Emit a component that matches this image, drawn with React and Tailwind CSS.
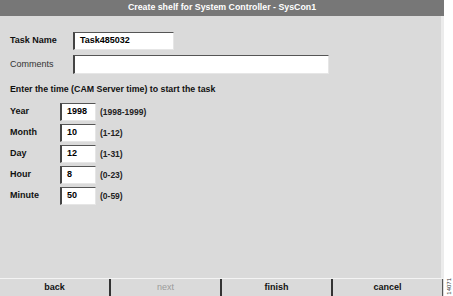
import React from 'react';

const font = { fontFamily: '"Liberation Sans", Arial, sans-serif' };

const Field = ({ value, className }) => (
  <div
    className={`h-[18px] bg-white border-t border-l-2 border-t-[#555] border-l-[#444] border-r border-b border-r-[#e6e6e6] border-b-[#e6e6e6] pl-[5px] pt-[1px] text-[9px] font-bold text-black leading-[12px] ${className}`}
  >
    {value}
  </div>
);

const TimeRow = ({ label, value, range }) => (
  <div className="flex items-center h-[18px]">
    <span className="w-[50px] text-[9px] font-bold text-[#111]">{label}</span>
    <Field value={value} className="w-[36px]" />
    <span className="ml-[4px] text-[8.5px] font-bold text-[#222]">{range}</span>
  </div>
);

const App = () => {
  return (
    <div className="w-[453px] h-[296px] flex bg-white overflow-hidden" style={font}>
      {/* main panel */}
      <div className="w-[444px] h-full flex flex-col">
        <div className="h-[16px] bg-[#777777] flex items-center justify-center text-white text-[8.8px] font-bold">
          Create shelf for System Controller - SysCon1
        </div>

        <div className="flex-1 bg-[#dadada] border-r-[3px] border-r-[#ececec] pl-[10px] pt-[16px]">
          {/* Task name */}
          <div className="flex items-center h-[18px]">
            <span className="w-[63px] text-[9px] font-bold text-[#111]">Task Name</span>
            <Field value="Task485032" className="w-[101px]" />
          </div>

          {/* Comments */}
          <div className="flex items-center h-[19px] mt-[5px]">
            <span className="w-[63px] text-[9px] text-[#333]">Comments</span>
            <Field value="" className="w-[256px] h-[19px]" />
          </div>

          <div className="mt-[10px] text-[8.8px] font-bold text-[#111] leading-[10px]">
            Enter the time (CAM Server time) to start the task
          </div>

          <div className="mt-[9px] flex flex-col gap-[3px]">
            <TimeRow label="Year" value="1998" range="(1998-1999)" />
            <TimeRow label="Month" value="10" range="(1-12)" />
            <TimeRow label="Day" value="12" range="(1-31)" />
            <TimeRow label="Hour" value="8" range="(0-23)" />
            <TimeRow label="Minute" value="50" range="(0-59)" />
          </div>
        </div>

        {/* button bar */}
        <div className="h-[18px] flex bg-[#dadada] border-t border-t-[#f4f4f4] pr-[1px]">
          <div className="flex-1 flex items-center justify-center text-[9px] font-bold text-[#111] border-r-2 border-r-[#333]">back</div>
          <div className="flex-1 flex items-center justify-center text-[9px] text-[#9a9a9a] border-r-2 border-r-[#333]">next</div>
          <div className="flex-1 flex items-center justify-center text-[9px] font-bold text-[#111] border-r-2 border-r-[#333]">finish</div>
          <div className="flex-1 flex items-center justify-center text-[9px] font-bold text-[#111] border-r border-r-[#555]">cancel</div>
        </div>
      </div>

      {/* figure number strip */}
      <div className="flex-1 flex flex-col justify-end items-center pb-[1px]">
        <span className="text-[6px] text-[#333] leading-none [writing-mode:vertical-rl] rotate-180">14071</span>
      </div>
    </div>
  );
};

export default App;
